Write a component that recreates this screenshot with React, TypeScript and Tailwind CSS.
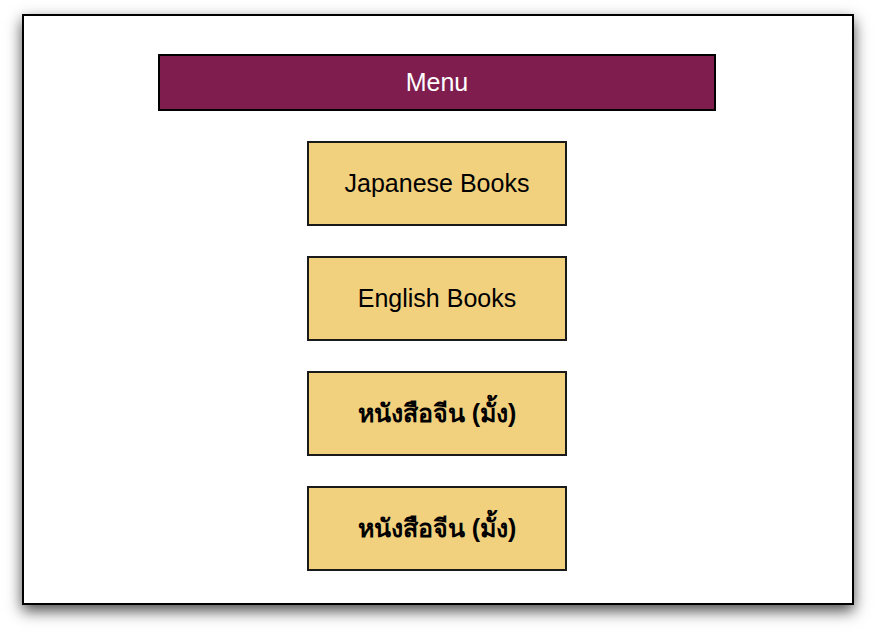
export default function App() {
  const items = ["Japanese Books", "English Books", "หนังสือจีน (มั้ง)", "หนังสือจีน (มั้ง)"];
  return (
    <div className="w-[875px] h-[635px] bg-white pt-[14px] pl-[22px] font-['Liberation_Sans',Arial,sans-serif]">
      <div className="w-[832px] h-[591px] border-2 border-black bg-white shadow-[0_6px_14px_rgba(0,0,0,0.7)] flex flex-col items-center pt-[38px] pr-[2px]">
        <div className="w-[558px] h-[57px] border-2 border-black bg-[#7f1e4e] flex items-center justify-center text-white text-[25px]">
          Menu
        </div>
        <div className="mt-[30px] flex flex-col gap-[30px]">
          {items.map((label, i) => (
            <button
              key={i}
              className={`w-[260px] h-[85px] border-2 border-[#1a1a1a] bg-[#f2d17e] flex items-center justify-center text-black text-[25px] ${i >= 2 ? "font-bold" : ""}`}
            >
              {label}
            </button>
          ))}
        </div>
      </div>
    </div>
  );
}
